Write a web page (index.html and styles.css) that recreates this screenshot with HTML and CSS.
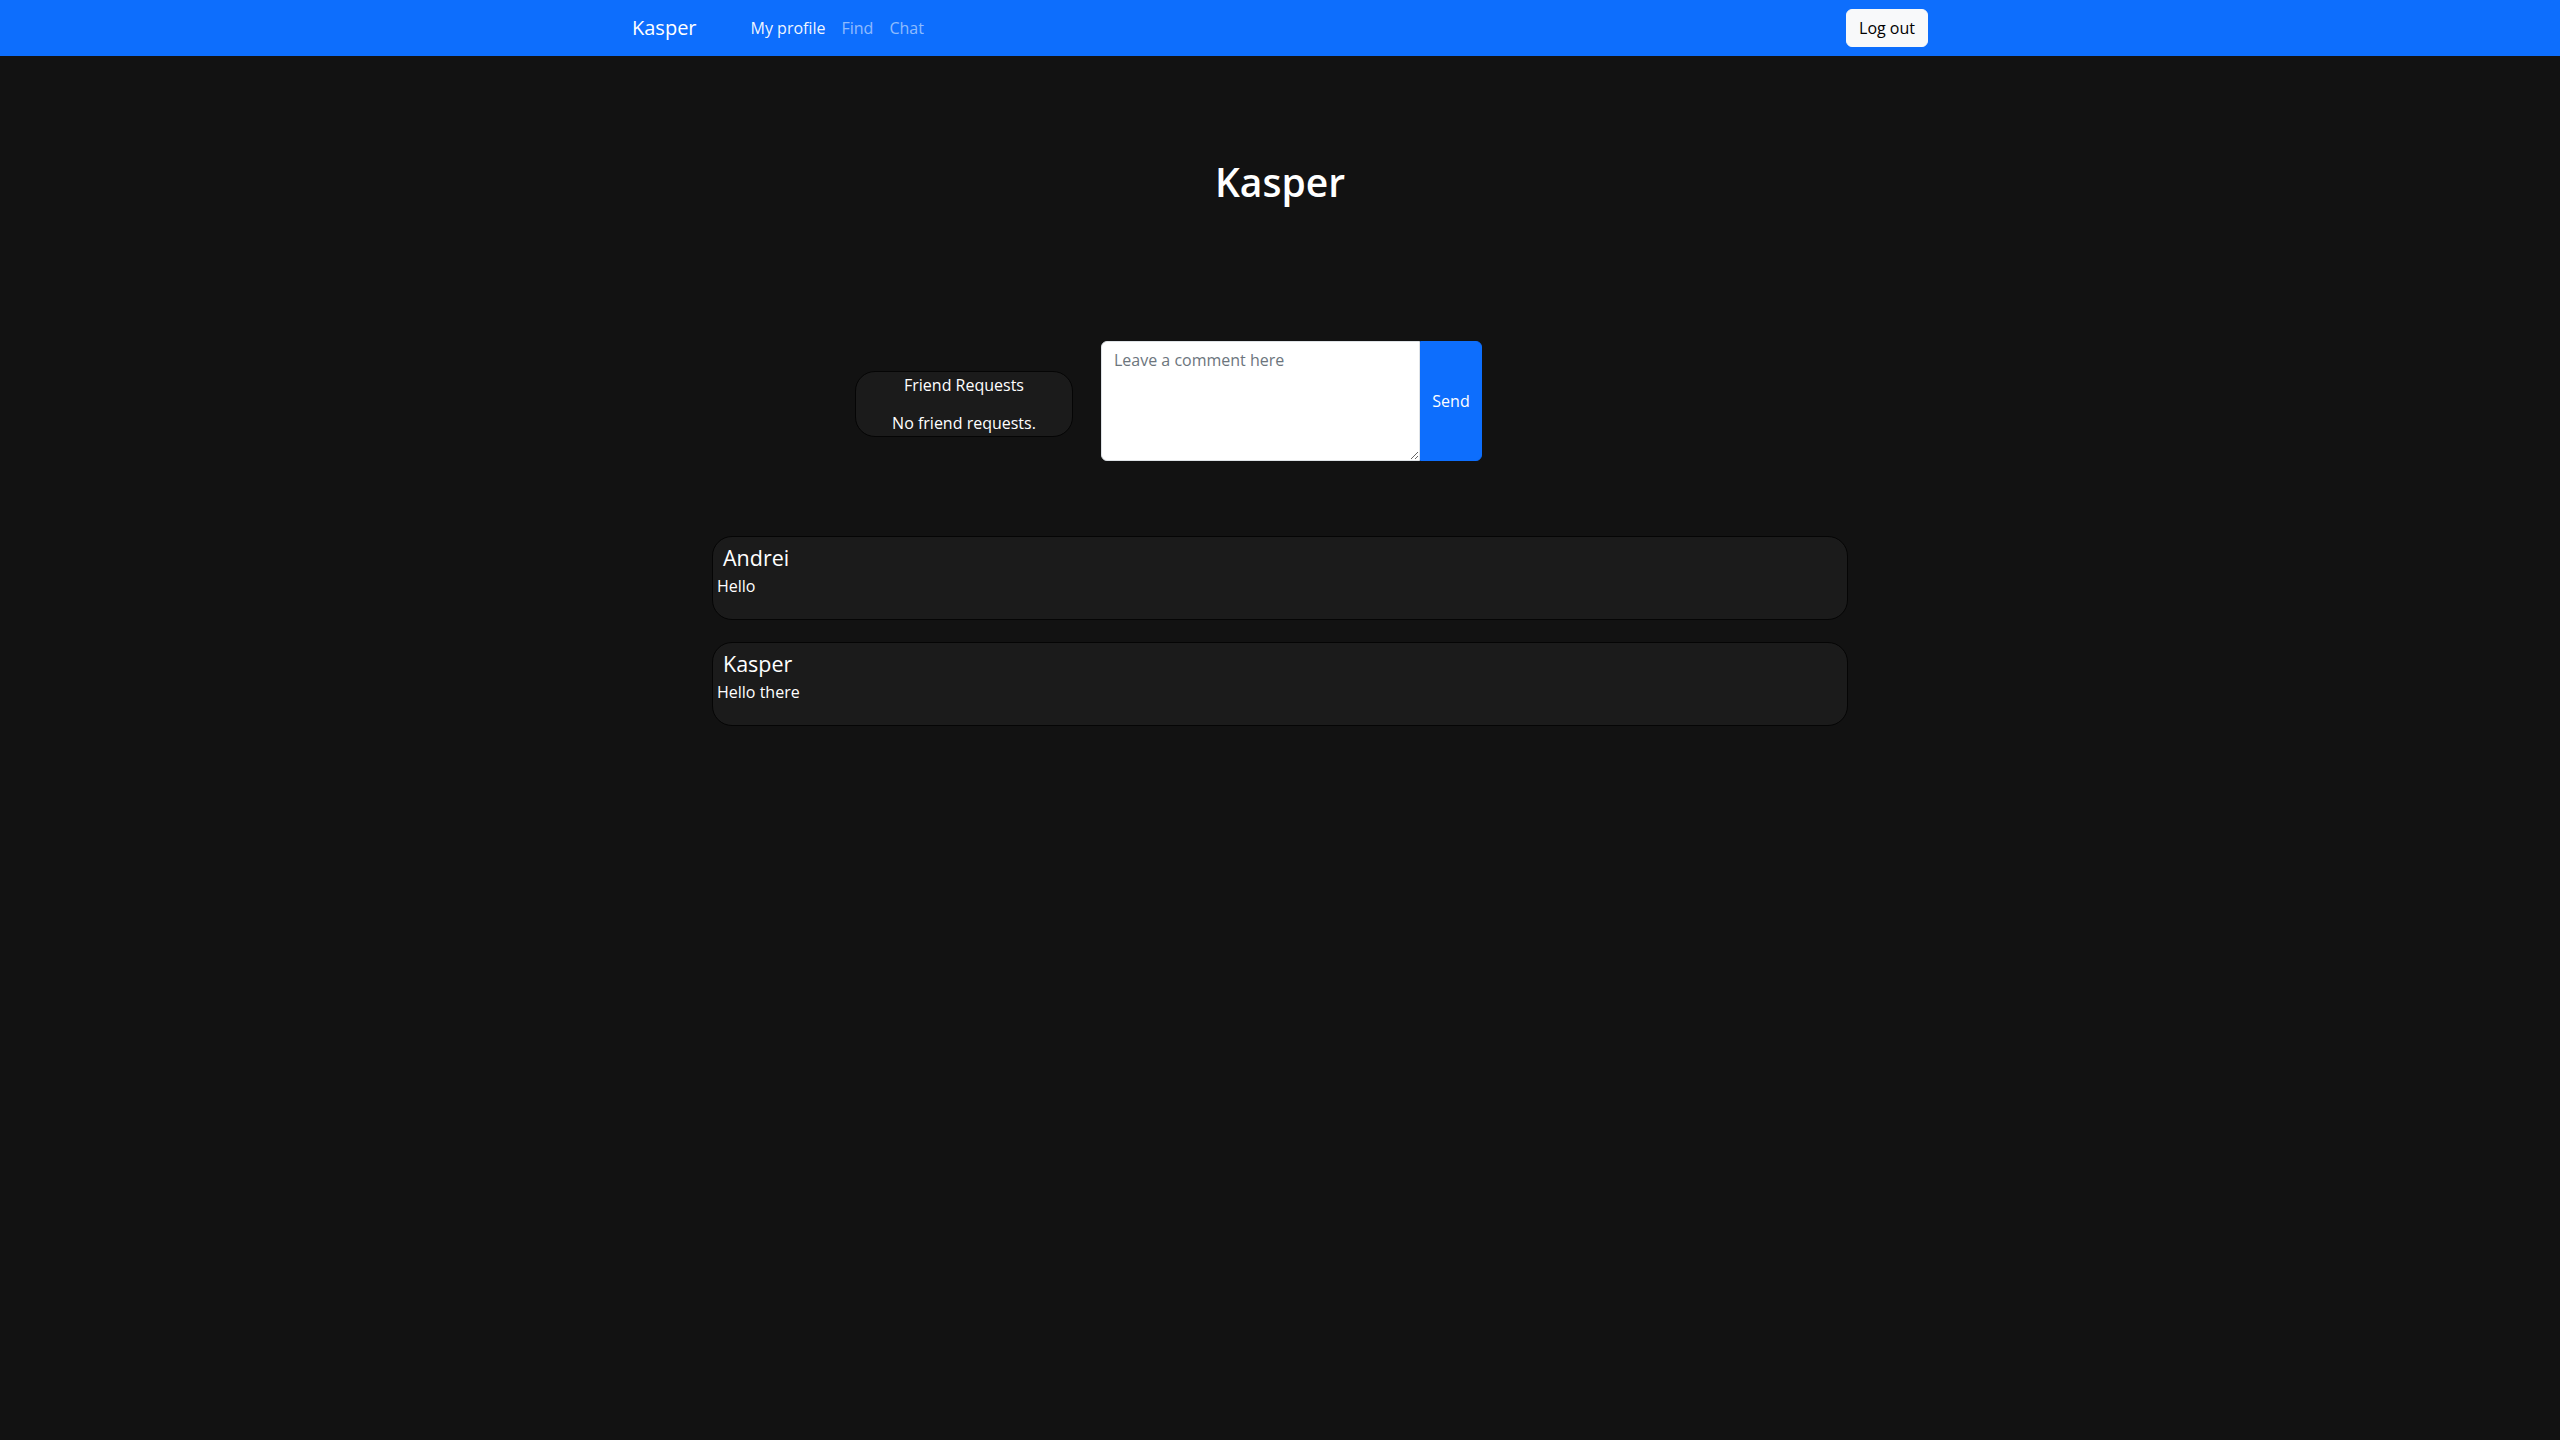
FILE: index.html
```html
<!DOCTYPE html>
<html lang="en">
<head>
<meta charset="utf-8">
<title>Kasper</title>
<link rel="stylesheet" href="styles.css">
</head>
<body>
<nav class="navbar">
  <div class="nav-container">
    <a class="brand" href="#">Kasper</a>
    <ul class="nav-links">
      <li><a class="nav-link active" href="#">My profile</a></li>
      <li><a class="nav-link" href="#">Find</a></li>
      <li><a class="nav-link" href="#">Chat</a></li>
    </ul>
    <button class="btn-logout" type="button">Log out</button>
  </div>
</nav>

<main class="main">
  <h1 class="profile-title">Kasper</h1>

  <section class="compose-row">
    <div class="friend-box">
      <div class="friend-title">Friend Requests</div>
      <div class="friend-empty">No friend requests.</div>
    </div>
    <form class="comment-group">
      <textarea class="comment-input" placeholder="Leave a comment here"></textarea>
      <button class="btn-send" type="button">Send</button>
    </form>
  </section>

  <section class="posts">
    <article class="post-card">
      <div class="post-author">Andrei</div>
      <div class="post-text">Hello</div>
    </article>
    <article class="post-card">
      <div class="post-author">Kasper</div>
      <div class="post-text">Hello there</div>
    </article>
  </section>
</main>
</body>
</html>
```

FILE: styles.css
```css
* { box-sizing: border-box; }

html, body {
  margin: 0;
  padding: 0;
}

body {
  background: #121212;
  color: #fff;
  font-family: "Open Sans", "Noto Sans", "Liberation Sans", sans-serif;
  font-size: 16px;
  line-height: 24px;
  min-height: 1440px;
}

a { text-decoration: none; }

.navbar {
  background: #0d6efd;
  height: 56px;
  display: flex;
  align-items: center;
}

.nav-container {
  width: 1320px;
  margin: 0 auto;
  padding: 0 12px;
  display: flex;
  align-items: center;
}

.brand {
  color: #fff;
  font-size: 20px;
  line-height: 30px;
  margin-right: 46px;
}

.nav-links {
  list-style: none;
  margin: 0;
  padding: 0;
  display: flex;
}

.nav-link {
  display: block;
  padding: 8px 8px;
  color: rgba(255, 255, 255, 0.55);
  font-size: 16px;
  line-height: 24px;
}

.nav-link.active { color: rgba(255, 255, 255, 0.95); }

.btn-logout {
  margin-left: auto;
  background: #f8f9fa;
  border: 1px solid #f8f9fa;
  border-radius: 6px;
  color: #000;
  font-family: inherit;
  font-size: 16px;
  line-height: 24px;
  padding: 6px 12px;
  height: 38px;
}

.main {
  display: flex;
  flex-direction: column;
  align-items: center;
}

.profile-title {
  margin: 102px 0 0;
  font-size: 39px;
  line-height: 48px;
  font-weight: 600;
}

.compose-row {
  width: 1136px;
  margin-top: 135px;
  padding-left: 143px;
  display: flex;
  align-items: center;
  gap: 28px;
}

.friend-box {
  width: 218px;
  margin-top: 6px;
  background: #1b1b1b;
  border: 1px solid #050505;
  border-radius: 20px;
  text-align: center;
  color: #fff;
  font-size: 16px;
  padding: 1px 0 1px;
}

.friend-title { line-height: 24px; }
.friend-empty { line-height: 24px; margin-top: 14px; }

.comment-group {
  display: flex;
  margin: 0;
}

.comment-input {
  width: 319px;
  height: 120px;
  resize: vertical;
  padding: 6px 12px;
  border: 1px solid #dee2e6;
  border-radius: 6px 0 0 6px;
  background: #fff;
  font-family: inherit;
  font-size: 16px;
  line-height: 24px;
  color: #212529;
  outline: none;
}

.comment-input::placeholder { color: #6c757d; }

.btn-send {
  width: 62px;
  height: 120px;
  background: #0d6efd;
  border: 1px solid #0d6efd;
  border-radius: 0 6px 6px 0;
  color: #fff;
  font-family: inherit;
  font-size: 16px;
  padding: 0;
}

.posts {
  width: 1136px;
  margin-top: 75px;
  display: flex;
  flex-direction: column;
  gap: 22px;
}

.post-card {
  background: #1b1b1b;
  border: 1px solid #050505;
  border-radius: 20px;
  padding: 9px 4px 21px;
}

.post-author {
  font-size: 21.5px;
  font-weight: 500;
  line-height: 24px;
  margin-left: 6px;
}

.post-text {
  margin-top: 4px;
  font-size: 16px;
  line-height: 24px;
}
```
